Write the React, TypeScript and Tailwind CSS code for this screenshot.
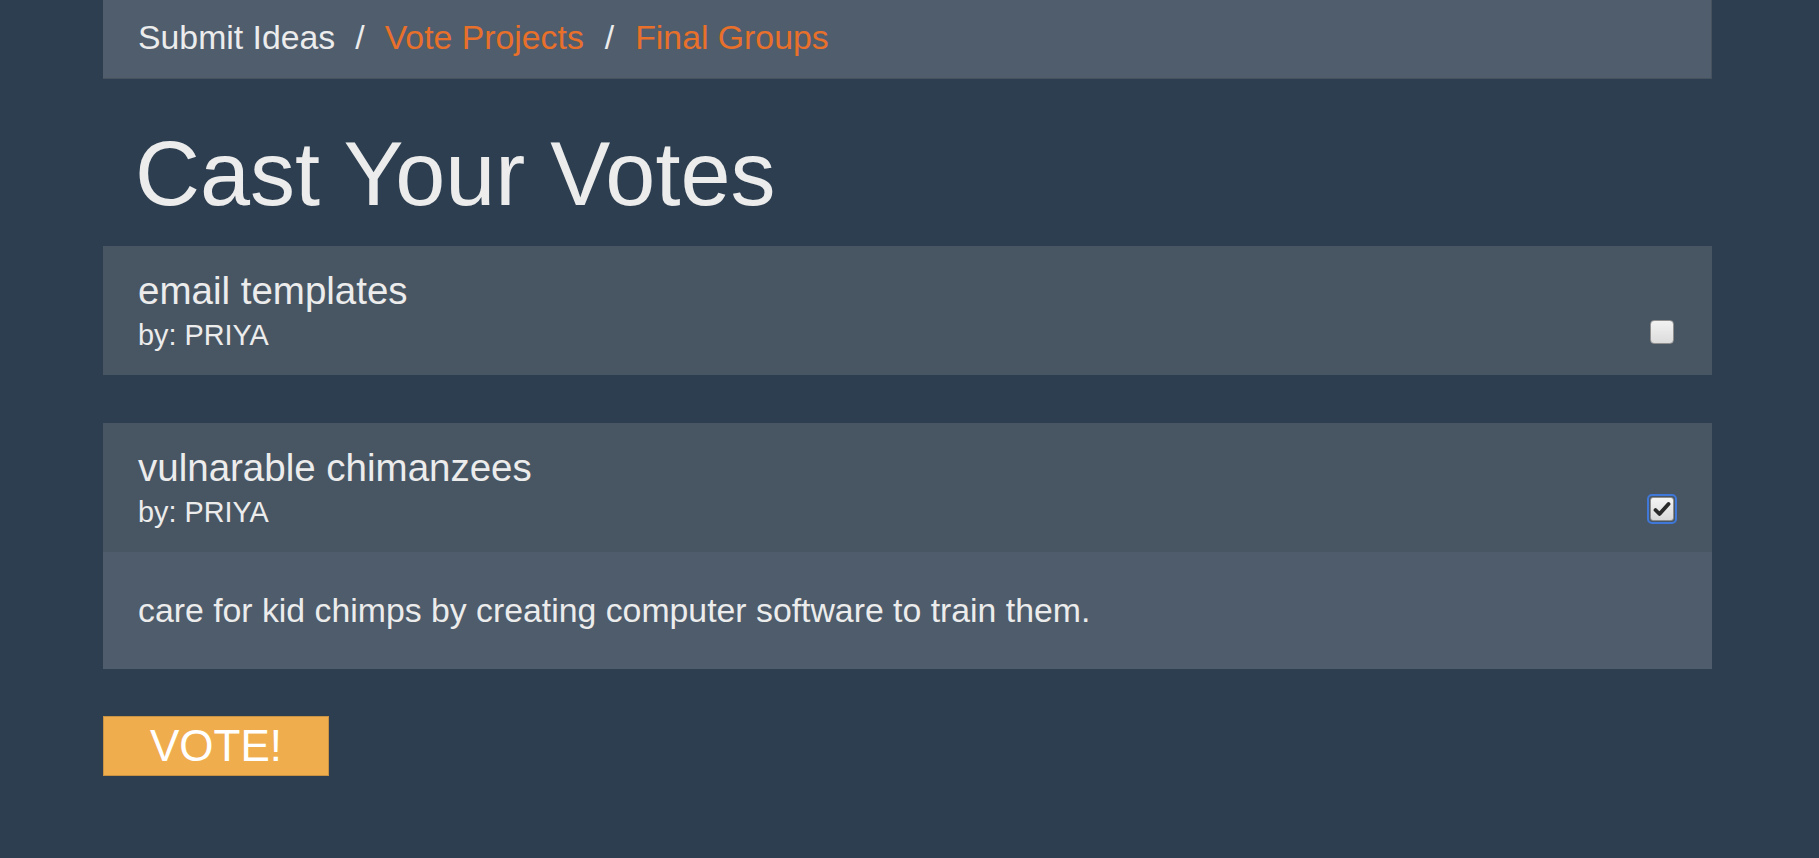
import React from 'react';

type Idea = { title: string; author: string; description?: string; checked: boolean };

const ideas: Idea[] = [
  { title: 'email templates', author: 'PRIYA', checked: false },
  {
    title: 'vulnarable chimanzees',
    author: 'PRIYA',
    description: 'care for kid chimps by creating computer software to train them.',
    checked: true,
  },
];

function Box({ checked }: { checked: boolean }) {
  if (checked) {
    return (
      <div className="flex h-[30px] w-[30px] items-center justify-center rounded-[5px] border-2 border-[#3f78d8]">
        <div className="flex h-[24px] w-[24px] items-center justify-center rounded-[3px] border border-[#8d8d8d] bg-gradient-to-b from-[#f4f4f4] to-[#d9d9d9]">
          <svg width="18" height="16" viewBox="0 0 18 16">
            <path d="M2.5 9 L6.5 13 L15.5 3" fill="none" stroke="#2a2a2a" strokeWidth="3.8" strokeLinecap="round" strokeLinejoin="round" />
          </svg>
        </div>
      </div>
    );
  }
  return (
    <div className="m-[3px] h-[24px] w-[24px] rounded-[4px] border border-[#8f8f8f] bg-gradient-to-b from-[#f2f2f2] to-[#dcdcdc]" />
  );
}

function IdeaCard({ idea }: { idea: Idea }) {
  return (
    <div>
      <div className="flex h-[129px] items-start justify-between bg-[#485664] pl-[35px] pr-[35px] pt-[22px]">
        <div>
          <div className="text-[38.5px] leading-[45px] text-[#ececec]">{idea.title}</div>
          <div className="mt-[6px] text-[28.8px] leading-[33px] text-[#ececec]">by: {idea.author}</div>
        </div>
        <div className="mt-[49px]">
          <Box checked={idea.checked} />
        </div>
      </div>
      {idea.description && (
        <div className="h-[117px] bg-[#4e5c6b] pl-[35px] pt-[38px] text-[33.8px] leading-[41px] text-[#ececec]">
          {idea.description}
        </div>
      )}
    </div>
  );
}

export default function App() {
  return (
    <main
      className="min-h-screen bg-[#2c3e50]"
      style={{ fontFamily: '"Liberation Sans", Arial, sans-serif' }}
    >
      <div className="ml-[103px] w-[1609px]">
        <nav className="flex h-[79px] items-start border-r border-b border-[#46535f] bg-[#4f5d6d] pl-[35px] pt-[18px] text-[33.8px] leading-[38px]">
          <span className="text-[#ececec]">Submit Ideas</span>
          <span className="mx-[20px] text-[#ececec]">/</span>
          <span className="text-[#e8702a]">Vote Projects</span>
          <span className="mx-[21px] text-[#ececec]">/</span>
          <span className="text-[#e8702a]">Final Groups</span>
        </nav>

        <h1 className="mt-[50px] mb-[27px] pl-[32px] text-[90px] leading-[90px] text-[#ececec]">Cast Your Votes</h1>

        <div className="flex flex-col gap-[48px]">
          {ideas.map((idea) => (
            <IdeaCard key={idea.title} idea={idea} />
          ))}
        </div>

        <button className="mt-[47px] flex h-[60px] w-[226px] items-center justify-center border border-[#c99345] bg-[#f0ad4e] text-[44px] text-white">
          VOTE!
        </button>
      </div>
    </main>
  );
}
